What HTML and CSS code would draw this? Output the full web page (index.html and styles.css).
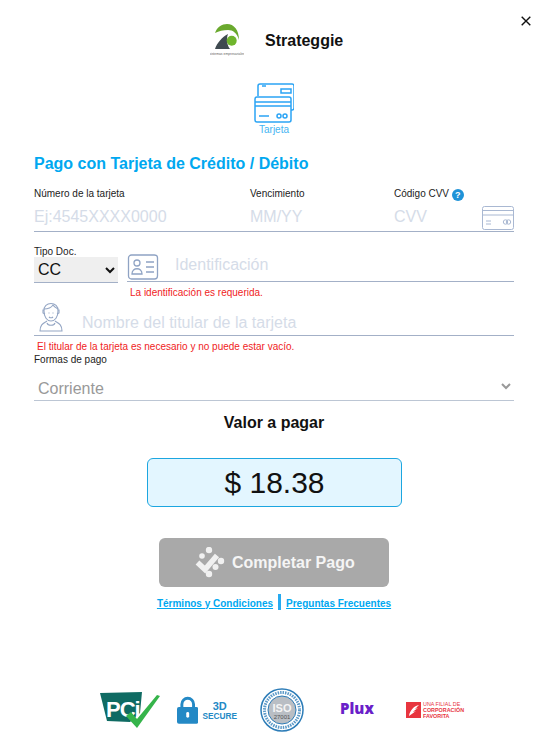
FILE: index.html
```html
<!DOCTYPE html>
<html lang="en">
<head>
  <meta charset="UTF-8" />
  <title>Strateggie - Pago</title>
  <meta name="viewport" content="width=device-width, initial-scale=1.0" />
  <link rel="stylesheet" href="styles.css">
</head>
<body>

<button class="close" aria-label="Cerrar">
  <svg width="10" height="10" viewBox="0 0 10 10"><path d="M.7.7l8.6 8.6M9.3.7L.7 9.3" stroke="#111" stroke-width="1.4"/></svg>
</button>

<header class="brand">
  <svg class="brand-logo" width="34" height="34" viewBox="0 0 34 34">
    <path d="M5 11C7 5 12 2 17 2c7 0 12 6 12 16-2-7-6-10-11-10-5 0-9 1-13 3z" fill="#6aa92e"/>
    <path d="M5 27C7 21 12 15 18 12c-2 5-1 11 2 15z" fill="#3f4a50"/>
    <circle cx="21.700" cy="18.700" r="5" fill="#6fb52c"/>
    <text x="17" y="32.500" class="brand-tiny">sistemas empresariales</text>
  </svg>
  <span class="brand-name">Strateggie</span>
</header>

<div class="tab">
  <svg width="40" height="40" viewBox="0 0 40 40" fill="none" stroke="#2ba4f5" stroke-width="1.500">
    <path d="M4 13V3a2 2 0 0 1 2-2h32a2 2 0 0 1 2 2v22a2 2 0 0 1-2 2h-1"/>
    <path d="M27 6h10v4H27zM8 3h4"/>
    <rect x="1" y="14" width="36" height="25" rx="2"/>
    <path d="M1 19h36M1 23h36M5 33h10"/>
    <circle cx="25" cy="33" r="2"/>
    <circle cx="31" cy="33" r="2"/>
  </svg>
  <span class="tab-label">Tarjeta</span>
</div>

<main class="form">
  <h1 class="title">Pago con Tarjeta de Crédito / Débito</h1>

  <div class="card-row">
    <div class="field field-number">
      <label>Número de la tarjeta</label>
      <input type="text" placeholder="Ej:4545XXXX0000" />
    </div>
    <div class="field field-date">
      <label>Vencimiento</label>
      <input type="text" placeholder="MM/YY" />
    </div>
    <div class="field field-cvv">
      <label>Código CVV <span class="help">?</span></label>
      <input type="text" placeholder="CVV" />
      <svg class="cvv-icon" width="32" height="24" viewBox="0 0 32 24" fill="none" stroke="#a9b8d2" stroke-width="1">
        <rect x=".5" y=".5" width="31" height="23" rx="2"/>
        <path d="M.5 4.500h31M.5 9h31M4 15h5M4 18h5"/>
        <circle cx="23.500" cy="16" r="2.200"/>
        <circle cx="26.500" cy="16" r="2.200"/>
      </svg>
    </div>
  </div>

  <div class="doc-row">
    <div class="doc-type">
      <label>Tipo Doc.</label>
      <select class="doc-select"><option>CC</option></select>
    </div>
    <div class="doc-id">
      <div class="doc-input">
        <svg width="32" height="26" viewBox="0 0 32 26" fill="none" stroke="#8fa3c4" stroke-width="1.3">
          <rect x="1.500" y="1" width="29" height="24" rx="3"/>
          <circle cx="10" cy="9" r="3"/>
          <path d="M5 20c0-7 10-7 10 0zM19 8h8M19 13h8M19 18h8"/>
        </svg>
        <input type="text" placeholder="Identificación" />
      </div>
      <p class="error error-id">La identificación es requerida.</p>
    </div>
  </div>

  <div class="holder">
    <svg width="26" height="32" viewBox="0 0 26 32" fill="none" stroke="#94a6c4" stroke-width="1.1">
      <path d="M6 11c-1-10 15-10 14 0 0 6-3 10-7 10s-7-4-7-10z"/>
      <path d="M6 9c3 0 7-1 9-4 1 2 3 3 5 4M6 10H5v3l2 1M20 10h1v3l-2 1"/>
      <path d="M9 21c-3 2-7 3-7 10h22c0-7-4-8-7-10M9 23c1 3 7 3 8 0"/>
      <path d="M10.500 13h1M14.500 13h1M11 17c1 1 3 1 4 0"/>
    </svg>
    <input type="text" placeholder="Nombre del titular de la tarjeta" />
  </div>
  <p class="error error-holder">El titular de la tarjeta es necesario y no puede estar vacío.</p>

  <label class="pay-label">Formas de pago</label>
  <select class="pay-select"><option>Corriente</option></select>

  <h2 class="total-label">Valor a pagar</h2>
  <div class="total">$ 18.38</div>

  <button class="pay-btn">
    <svg width="31" height="31" viewBox="0 0 31 31" fill="#f1f1f1">
      <circle cx="15" cy="3" r="3.200"/>
      <circle cx="27" cy="14" r="3.200"/>
      <circle cx="21.500" cy="20" r="3"/>
      <circle cx="15" cy="27" r="3.200"/>
      <circle cx="8" cy="9" r="2.800"/>
      <path d="M3.500 15.500l7.500 7 12-14" fill="none" stroke="#f1f1f1" stroke-width="5.500"/>
    </svg>
    <span>Completar Pago</span>
  </button>

  <div class="links">
    <a href="#">Términos y Condiciones</a>
    <span class="sep"></span>
    <a href="#">Preguntas Frecuentes</a>
  </div>
</main>

<footer class="seals">
  <svg class="seal-pci" width="60" height="38" viewBox="0 0 60 38">
    <path d="M0 2L42 1 40 22 30 31 7 30z" fill="#0f6b63"/>
    <text x="6" y="26" class="pci-text">PCi</text>
    <path d="M26 25l5-4 6 7L57 4l3 1-23 32z" fill="#35b44a"/>
  </svg>
  <div class="seal-3d">
    <svg width="22" height="28" viewBox="0 0 22 28">
      <path d="M5 12V8a6 6 0 0 1 12 0v4" fill="none" stroke="#2489c5" stroke-width="3"/>
      <rect y="11" width="22" height="17" rx="2" fill="#2489c5"/>
      <rect x="9.500" y="16" width="3" height="6" rx="1.500" fill="#fff"/>
    </svg>
    <div class="seal-3d-text"><b>3D</b><span>SECURE</span></div>
  </div>
  <svg class="seal-iso" width="46" height="46" viewBox="0 0 46 46">
    <circle cx="22" cy="23" r="21" fill="#fff" stroke="#2d7db8" stroke-width="1.500"/>
    <circle cx="22" cy="23" r="14" fill="#b9bec4" stroke="#2d7db8" stroke-width="1"/>
    <circle cx="22" cy="23" r="17.500" fill="none" stroke="#5d9ac8" stroke-width="3" stroke-dasharray="1.500 1"/>
    <text x="22" y="25" class="iso-text">ISO</text>
    <text x="22" y="32" class="iso-num">27001</text>
  </svg>
  <span class="seal-plux">Plux</span>
  <div class="seal-cf">
    <svg width="15" height="16" viewBox="0 0 15 16">
      <rect width="15" height="16" fill="#e8353f"/>
      <path d="M3 14C4 8 8 4 13 3c-2 2-3 3-4 4l3-1c-2 1-4 3-5 4l3-1c-2 1-4 3-7 5z" fill="#fff"/>
    </svg>
    <div class="seal-cf-text"><span>UNA FILIAL DE</span><b>CORPORACIÓN</b><b>FAVORITA</b></div>
  </div>
</footer>

</body>
</html>
```

FILE: styles.css
```css
body {
  margin: 0;
  font-family: "Liberation Sans", Arial, sans-serif;
  background: #fff;
  color: #111;
  height: 736px;
  overflow: hidden;
  position: relative;
}
.close {
  position: absolute;
  top: 16px;
  left: 521px;
  padding: 0;
  border: none;
  background: none;
  line-height: 0;
}
.brand {
  display: flex;
  align-items: center;
  height: 34px;
  padding: 22px 0 0 210px;
}
.brand-logo {
  margin-right: 21px;
}
.brand-tiny {
  font-size: 3.400px;
  text-anchor: middle;
  fill: #666;
}
.brand-name {
  margin-top: 4px;
  font-size: 16px;
  font-weight: bold;
}
.tab {
  display: flex;
  flex-direction: column;
  align-items: center;
  width: 40px;
  margin: 27px 0 0 254px;
}
.tab-label {
  font-size: 10px;
  line-height: 12px;
  margin-top: 1px;
  color: #45b4f2;
}
.form {
  padding: 0 38px 0 34px;
}
.title {
  margin: 17px 0 0;
  font-size: 16px;
  line-height: 21px;
  color: #00a8f0;
}
label {
  display: block;
  font-size: 10px;
  line-height: 12px;
  color: #222;
}
input {
  display: block;
  width: 100%;
  box-sizing: border-box;
  padding: 0;
  border: none;
  outline: none;
  background: transparent;
  font: 16px "Liberation Sans", Arial, sans-serif;
  color: #222;
}
input::placeholder {
  color: #d5dce8;
}
.card-row {
  display: flex;
  margin-top: 14px;
  border-bottom: 1px solid #a3b0c7;
  height: 43px;
}
.field input {
  margin-top: 6px;
  height: 21px;
}
.field-number {
  width: 216px;
}
.field-date {
  width: 144px;
}
.field-cvv {
  flex: 1;
  position: relative;
}
.field-cvv label {
  height: 12px;
}
.help {
  display: inline-block;
  width: 12px;
  height: 12px;
  border-radius: 50%;
  background: #1f93d8;
  color: #fff;
  font-size: 9px;
  font-weight: bold;
  line-height: 12px;
  text-align: center;
  vertical-align: top;
  margin-top: 1px;
}
.cvv-icon {
  position: absolute;
  right: 0;
  top: 18px;
}
.doc-row {
  display: flex;
  margin-top: 13px;
}
.doc-type {
  width: 84px;
  margin-right: 9px;
}
.doc-type label {
  height: 11px;
  padding-top: 1px;
}
.doc-select {
  display: block;
  width: 84px;
  height: 26px;
  padding: 0;
  border: none;
  border-bottom: 1px solid #a3b0c7;
  border-radius: 0;
  background: #efefef;
  font: 16px "Liberation Sans", Arial, sans-serif;
  color: #111;
}
.doc-id {
  flex: 1;
}
.doc-input {
  display: flex;
  align-items: center;
  height: 29px;
  margin-top: 7px;
  border-bottom: 1px solid #a3b0c7;
}
.doc-input svg {
  flex: none;
}
.doc-input input {
  margin: 0 0 3px 16px;
}
.error {
  margin: 0;
  font-size: 10px;
  line-height: 12px;
  color: #f01c24;
}
.error-id {
  margin: 5px 0 0 3px;
}
.holder {
  display: flex;
  align-items: flex-end;
  margin-top: 1px;
  border-bottom: 1px solid #a3b0c7;
  height: 35px;
}
.holder svg {
  flex: none;
  margin: 0 0 3px 4px;
}
.holder input {
  margin: 0 0 3px 18px;
}
.error-holder {
  margin: 5px 0 0 3px;
}
.pay-label {
  margin-top: 1px;
}
.pay-select {
  display: block;
  width: 100%;
  height: 30px;
  margin-top: 5px;
  padding: 6px 0 0;
  border: none;
  border-bottom: 1px solid #bcc6d4;
  background: #fff;
  font: 16px "Liberation Sans", Arial, sans-serif;
  color: #999;
}
.total-label {
  margin: 12px 0 0;
  font-size: 16px;
  line-height: 20px;
  text-align: center;
}
.total {
  width: 253px;
  height: 47px;
  margin: 25px 0 0 113px;
  border: 1px solid #1ca6e0;
  border-radius: 6px;
  background: #e3f6ff;
  font-size: 30px;
  line-height: 47px;
  text-align: center;
}
.pay-btn {
  display: flex;
  align-items: center;
  width: 230px;
  height: 49px;
  margin: 31px 0 0 125px;
  padding: 0 0 0 35px;
  border: none;
  border-radius: 6px;
  background: #a9a9a9;
  color: #f5f5f5;
  font: bold 16px "Liberation Sans", Arial, sans-serif;
}
.pay-btn span {
  margin-left: 7px;
}
.links {
  display: flex;
  align-items: center;
  justify-content: center;
  gap: 5px;
  margin: 7px 0 0 0;
  height: 16px;
  font-size: 10px;
  font-weight: bold;
}
.links a {
  padding-top: 2px;
  color: #00a8f0;
}
.sep {
  width: 3px;
  height: 16px;
  background: #27aaf0;
}
.seals {
  position: absolute;
  left: 100px;
  top: 687px;
  display: flex;
  align-items: center;
  height: 46px;
}
.seal-pci {
  margin-right: 17px;
}
.pci-text {
  font-size: 22px;
  font-weight: bold;
  letter-spacing: -1px;
  fill: #fff;
}
.seal-3d {
  display: flex;
  align-items: center;
  width: 60px;
  margin-right: 23px;
}
.seal-3d-text {
  display: flex;
  flex-direction: column;
  align-items: center;
  margin-left: 4px;
  color: #2489c5;
}
.seal-3d-text b {
  font-size: 11px;
  line-height: 12px;
}
.seal-3d-text span {
  font-size: 8.300px;
  font-weight: bold;
  line-height: 9px;
}
.seal-iso {
  margin-right: 34px;
}
.iso-text {
  font-size: 11px;
  font-weight: bold;
  text-anchor: middle;
  fill: #f4f4f4;
}
.iso-num {
  font-size: 6px;
  text-anchor: middle;
  fill: #555;
}
.seal-plux {
  width: 36px;
  margin: 0 30px 4px 0;
  font: 800 15px "Open Sans", sans-serif;
  color: #6a1fc9;
}
.seal-cf {
  display: flex;
  align-items: center;
}
.seal-cf-text {
  display: flex;
  flex-direction: column;
  margin-left: 2px;
  font-size: 5.400px;
  line-height: 6px;
  color: #e8353f;
}
```
